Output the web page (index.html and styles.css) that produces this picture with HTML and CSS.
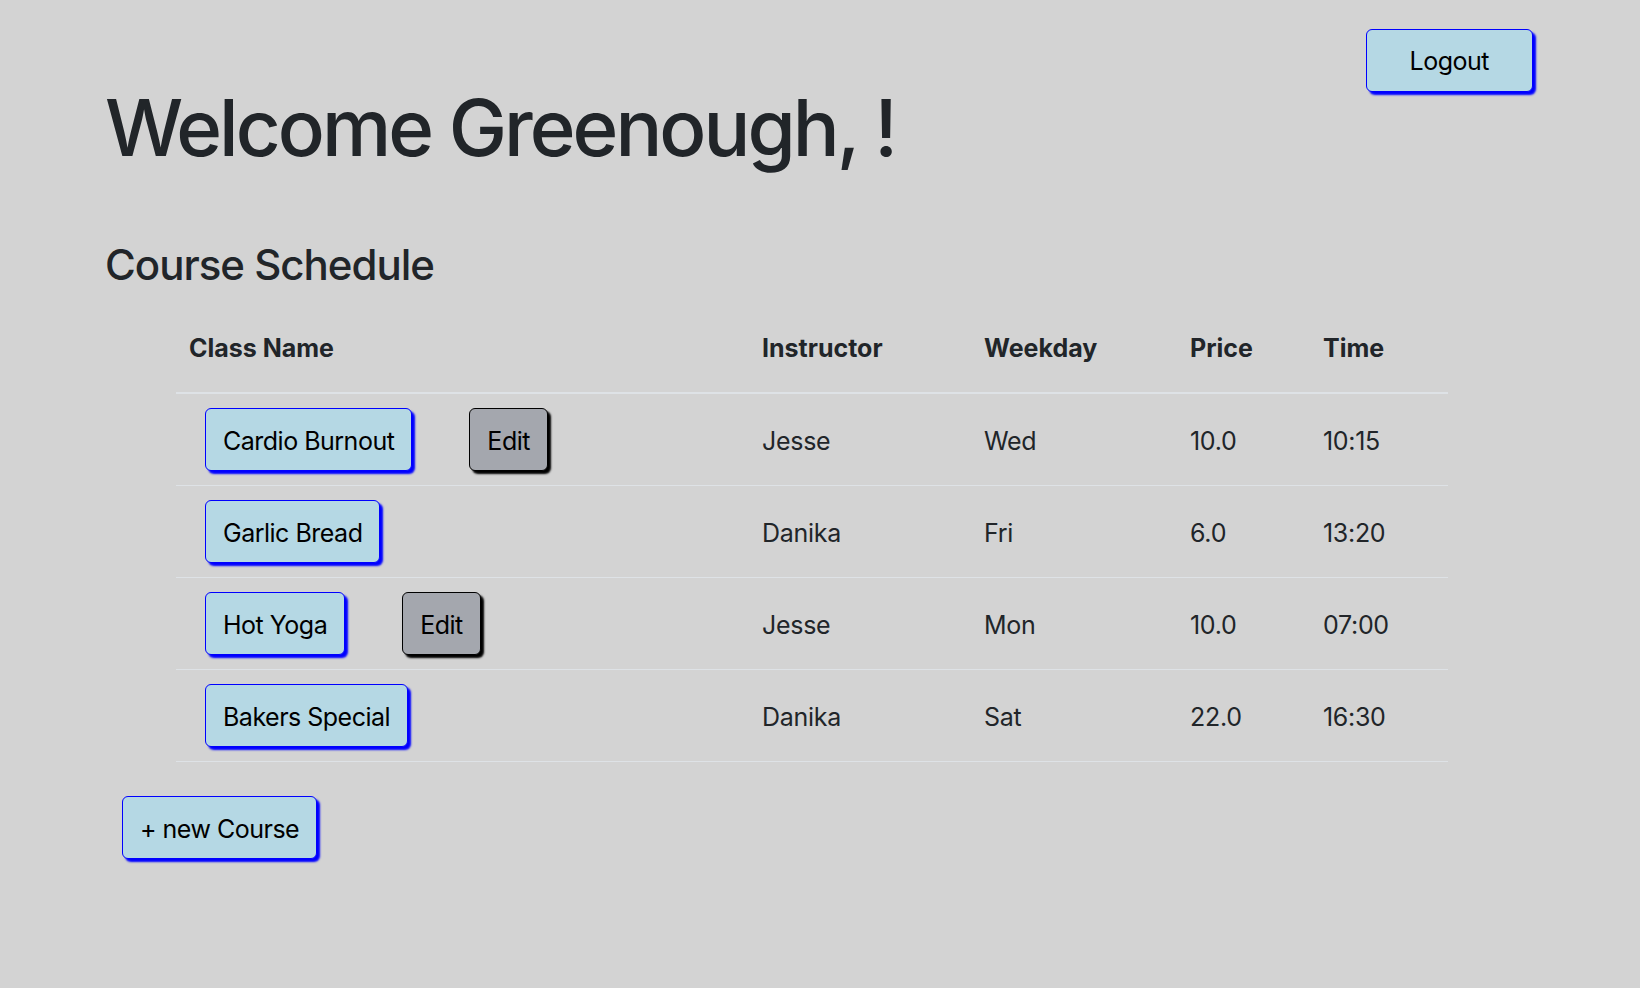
FILE: index.html
```html
<!DOCTYPE html>
<html lang="en">
  <head>
    <meta charset="UTF-8" />
    <meta name="viewport" content="width=device-width, initial-scale=1.0" />
    <title>Course Schedule</title>
    <link rel="stylesheet" href="styles.css">
  </head>
  <body>
    <div class="container">
      <button class="btn btn-logout">Logout</button>

      <h1>Welcome Greenough, !</h1>

      <h2>Course Schedule</h2>

      <table class="schedule">
        <colgroup>
          <col class="col-name" />
          <col class="col-instructor" />
          <col class="col-weekday" />
          <col class="col-price" />
          <col class="col-time" />
        </colgroup>
        <thead>
          <tr>
            <th>Class Name</th>
            <th>Instructor</th>
            <th>Weekday</th>
            <th>Price</th>
            <th>Time</th>
          </tr>
        </thead>
        <tbody>
          <tr>
            <td>
              <div class="class-cell">
                <button class="btn">Cardio Burnout</button>
                <button class="btn btn-edit">Edit</button>
              </div>
            </td>
            <td>Jesse</td>
            <td>Wed</td>
            <td>10.0</td>
            <td>10:15</td>
          </tr>
          <tr>
            <td>
              <div class="class-cell">
                <button class="btn">Garlic Bread</button>
              </div>
            </td>
            <td>Danika</td>
            <td>Fri</td>
            <td>6.0</td>
            <td>13:20</td>
          </tr>
          <tr>
            <td>
              <div class="class-cell">
                <button class="btn">Hot Yoga</button>
                <button class="btn btn-edit">Edit</button>
              </div>
            </td>
            <td>Jesse</td>
            <td>Mon</td>
            <td>10.0</td>
            <td>07:00</td>
          </tr>
          <tr>
            <td>
              <div class="class-cell">
                <button class="btn">Bakers Special</button>
              </div>
            </td>
            <td>Danika</td>
            <td>Sat</td>
            <td>22.0</td>
            <td>16:30</td>
          </tr>
        </tbody>
      </table>

      <button class="btn btn-new">+ new Course</button>
    </div>
  </body>
</html>
```

FILE: styles.css
```css
body {
  font-family: Inter, "Liberation Sans", sans-serif;
  font-size: 25px;
  line-height: 1.5;
  color: #212529;
  background-color: #d3d3d3;
  margin: 0;
  padding: 0;
}
.container {
  padding: 29px 107px 40px 105px;
}
h1 {
  font-size: 78px;
  font-weight: 500;
  line-height: 1.2;
  letter-spacing: -3px;
  margin: 52px 0 0 0;
}
h2 {
  font-size: 42px;
  font-weight: 500;
  line-height: 1.2;
  letter-spacing: -1px;
  margin: 65px 0 28px 0;
}
.btn {
  font-family: inherit;
  font-size: 25px;
  line-height: 37px;
  letter-spacing: -0.5px;
  color: #000;
  background-color: #b5d8e4;
  border: 1px solid #0000ff;
  border-radius: 6px;
  box-shadow: 3px 3px 2px #0000ff;
  padding: 14px 17px 10px 17px;
  cursor: pointer;
}
.btn-logout {
  float: right;
  padding: 13px 43px 11px 43px;
}
.btn-edit {
  background-color: #a4a7ae;
  border-color: #000;
  box-shadow: 3px 3px 2px #000;
}
.btn-new {
  margin: 34px 0 0 17px;
}
.schedule {
  width: 1272px;
  margin-left: 71px;
  border-collapse: collapse;
  table-layout: fixed;
}
.col-name {
  width: 573px;
}
.col-instructor {
  width: 222px;
}
.col-weekday {
  width: 206px;
}
.col-price {
  width: 133px;
}
.col-time {
  width: 138px;
}
th,
td {
  text-align: left;
  padding: 14px 13px;
  vertical-align: baseline;
}
th {
  font-weight: 700;
  padding: 12px 13px 25px 13px;
  border-bottom: 2px solid #dee2e6;
}
td {
  letter-spacing: -0.3px;
  border-bottom: 1px solid #dee2e6;
}
.class-cell {
  display: flex;
  align-items: baseline;
  gap: 57px;
  padding-left: 16px;
}
```
